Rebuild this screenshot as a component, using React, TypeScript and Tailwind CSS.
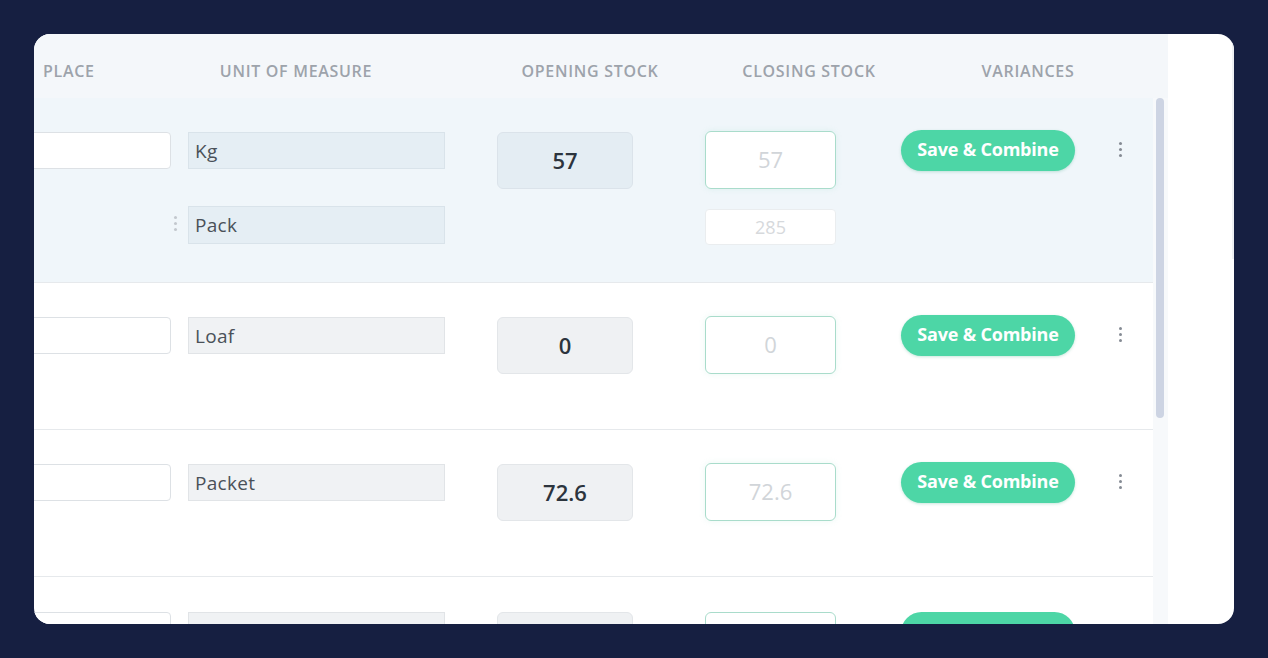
const font = { fontFamily: '"Open Sans", "Liberation Sans", sans-serif' };

type Row = {
  unit: string;
  opening: string;
  closing: string;
  second?: { unit: string; closing: string };
  active?: boolean;
};

const rows: Row[] = [
  { unit: "Kg", opening: "57", closing: "57", second: { unit: "Pack", closing: "285" }, active: true },
  { unit: "Loaf", opening: "0", closing: "0" },
  { unit: "Packet", opening: "72.6", closing: "72.6" },
];

function Kebab({ light }: { light?: boolean }) {
  const c = light ? "bg-[#c3c8ce]" : "bg-[#858b94]";
  return (
    <div className="flex w-[6px] flex-col items-center gap-[3px]">
      <span className={`h-[3px] w-[3px] rounded-full ${c}`} />
      <span className={`h-[3px] w-[3px] rounded-full ${c}`} />
      <span className={`h-[3px] w-[3px] rounded-full ${c}`} />
    </div>
  );
}

function StockRow({ row }: { row: Row }) {
  const unitBg = row.active
    ? "bg-[#e5eef4] border-[#d9e3ea]"
    : "bg-[#f0f2f4] border-[#e1e4e7]";
  const openBg = row.active
    ? "bg-[#e4edf3] border-[#dbe3ea]"
    : "bg-[#eff1f3] border-[#e3e6e9]";
  return (
    <div
      className={`flex items-start border-b border-[#e6e9ec] pt-[34px] ${
        row.active ? "h-[185px] bg-[#f0f6fa]" : "h-[147px] bg-white"
      }`}
    >
      {/* place */}
      <div className="-ml-[10px] h-[37px] w-[147px] rounded-sm border border-[#dde1e5] bg-white" />

      {/* unit of measure */}
      <div className="ml-[17px] flex flex-col gap-[37px]">
        <div className={`flex h-[37px] w-[257px] items-center border px-[6px] pt-[2px] text-[19px] tracking-[0.3px] text-[#4a5159] ${unitBg}`}>
          {row.unit}
        </div>
        {row.second && (
          <div className="relative">
            <div className="absolute top-[10px] -left-[16px]">
              <Kebab light />
            </div>
            <div className={`flex h-[38px] w-[257px] items-center border px-[6px] text-[19px] tracking-[0.3px] text-[#4a5159] ${unitBg}`}>
              {row.second.unit}
            </div>
          </div>
        )}
      </div>

      {/* opening stock */}
      <div
        className={`ml-[52px] flex h-[57px] w-[136px] items-center justify-center rounded-md border text-[22px] font-semibold text-[#2c343d] ${openBg}`}
      >
        {row.opening}
      </div>

      {/* closing stock */}
      <div className="-mt-[1px] ml-[72px] flex flex-col gap-[20px]">
        <div className="flex h-[58px] w-[131px] items-center justify-center rounded-md border-[1.5px] border-[#a9dccb] bg-white pb-[2px] text-[22px] text-[#d1d5d9] shadow-[0_0_6px_rgba(120,210,180,0.15)]">
          {row.closing}
        </div>
        {row.second && (
          <div className="flex h-[36px] w-[131px] items-center justify-center rounded border border-[#eaedef] bg-white text-[18px] text-[#d6d9dc]">
            {row.second.closing}
          </div>
        )}
      </div>

      {/* variances */}
      <button className="-mt-[2px] ml-[65px] flex h-[41px] w-[174px] items-center justify-center rounded-full bg-[#4dd6a6] pb-[2px] text-[18px] font-bold tracking-[-0.2px] text-white shadow-[0_1px_3px_rgba(40,160,120,0.25)]">
        Save &amp; Combine
      </button>

      <div className="mt-[10px] ml-[42px]">
        <Kebab />
      </div>
    </div>
  );
}

export default function App() {
  return (
    <div className="flex h-[658px] w-[1268px] items-start bg-[#161f41] p-[34px]" style={font}>
      <div className="flex h-[590px] w-[1200px] overflow-hidden rounded-[16px] bg-white">
        <div className="flex w-[1134px] flex-col">
          {/* header */}
          <div className="flex h-[64px] shrink-0 items-center bg-[#f4f7fa] pt-[10px] text-[16px] font-semibold tracking-[0.7px] text-[#9da3ab] uppercase">
            <div className="w-[162px] pl-[9px]">Place</div>
            <div className="w-[200px] text-center">Unit of measure</div>
            <div className="ml-[124px] w-[140px] text-center">Opening stock</div>
            <div className="ml-[79px] w-[140px] text-center">Closing stock</div>
            <div className="ml-[79px] w-[140px] text-center">Variances</div>
          </div>

          {/* body */}
          <div className="flex">
            <div className="flex w-[1119px] flex-col">
              {rows.map((r) => (
                <StockRow key={r.unit} row={r} />
              ))}
              <div className="flex items-start pt-[35px]">
                <div className="-ml-[10px] h-[37px] w-[147px] rounded-sm border border-[#dde1e5] bg-white" />
                <div className="ml-[17px] h-[37px] w-[257px] border border-[#e1e4e7] bg-[#f0f2f4]" />
                <div className="ml-[52px] h-[57px] w-[136px] rounded-md border border-[#e3e6e9] bg-[#eff1f3]" />
                <div className="ml-[72px] h-[58px] w-[131px] rounded-md border-[1.5px] border-[#a9dccb] bg-white" />
                <div className="ml-[65px] h-[41px] w-[174px] rounded-full bg-[#4dd6a6]" />
              </div>
            </div>
            <div className="w-[15px] bg-[#f7f9fb] pl-[3px]">
              <div className="h-[320px] w-[8px] rounded-full bg-[#cdd4e3]" />
            </div>
          </div>
        </div>
        <div className="flex flex-1 justify-end">
          <div className="h-[225px] w-[2px] bg-[#eef0f3]" />
        </div>
      </div>
    </div>
  );
}
